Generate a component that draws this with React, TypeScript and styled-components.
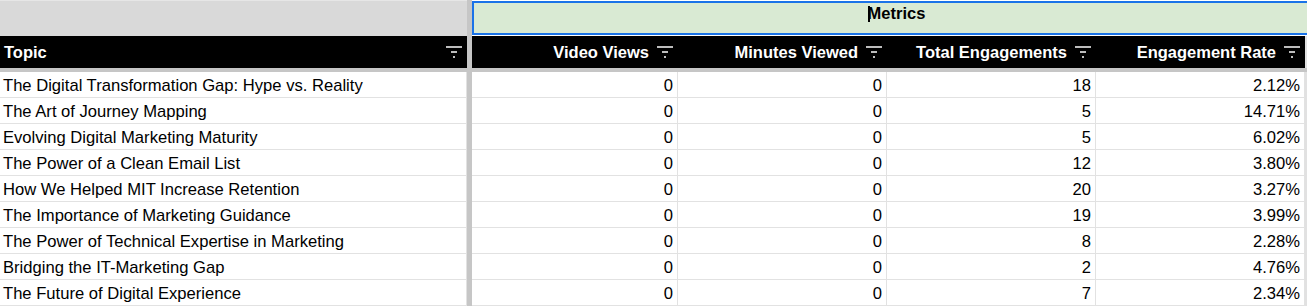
import React from "react";
import styled, { createGlobalStyle } from "styled-components";

const GlobalStyle = createGlobalStyle`
  html, body { margin: 0; padding: 0; background: #ffffff; }
  body { font-family: "Liberation Sans", Arial, sans-serif; overflow: hidden; }
`;

const COLS = "467px 5px 206px 209px 209px 209px 1fr";

const Sheet = styled.div`
  width: 1307px;
  height: 308px;
  overflow: hidden;
  display: flex;
  flex-direction: column;
  background: #ffffff;
`;

const Row = styled.div<{ $h: number }>`
  display: grid;
  grid-template-columns: ${COLS};
  height: ${(p) => p.$h}px;
  flex: none;
`;

const TopLeft = styled.div`
  background: #d9d9d9;
  border-top: 1px solid #e6e6e6;
`;

const Gutter = styled.div`
  background: #c6c6c6;
`;

const MergedCell = styled.div`
  grid-column: 3 / 8;
  margin-top: 1px;
  margin-bottom: 1px;
  background: #d9ead3;
  border: 2px solid #1a73e8;
  border-right: none;
  display: flex;
  justify-content: center;
  align-items: flex-start;
  padding-top: 1px;
  padding-left: 12px;
  font-weight: bold;
  font-size: 16.5px;
  color: #000;
  line-height: 19px;
`;

const Caret = styled.span`
  display: inline-block;
  width: 2px;
  height: 16px;
  margin-top: 2px;
  background: #000;
  margin-right: -2px;
`;

const HeadCell = styled.div<{ $left?: boolean }>`
  background: #000;
  color: #fff;
  font-weight: bold;
  font-size: 16.5px;
  display: flex;
  align-items: center;
  justify-content: ${(p) => (p.$left ? "space-between" : "flex-end")};
  gap: 8px;
  padding: 0 5px 0 4px;
  white-space: nowrap;
`;

const EdgeCell = styled.div`
  background: #e1e1e1;
`;

const DividerRow = styled.div`
  height: 4px;
  background: #c6c6c6;
  flex: none;
`;

const Cell = styled.div<{ $num?: boolean }>`
  font-size: 16.6px;
  color: #000;
  display: flex;
  align-items: center;
  justify-content: ${(p) => (p.$num ? "flex-end" : "flex-start")};
  padding: 3px 4px 0 3px;
  border-bottom: 1px solid #e2e2e2;
  border-right: 1px solid #e2e2e2;
  white-space: nowrap;
  overflow: hidden;
  background: #fff;
`;

const FilterIcon = () => (
  <svg width="16" height="12" viewBox="0 0 16 12" style={{ flex: "none" }}>
    <rect x="0" y="0" width="16" height="2" fill="#bdbdbd" />
    <rect x="5" y="5" width="6" height="2" fill="#bdbdbd" />
    <rect x="7" y="10" width="2" height="2" fill="#bdbdbd" />
  </svg>
);

const data: [string, number, number, number, string][] = [
  ["The Digital Transformation Gap: Hype vs. Reality", 0, 0, 18, "2.12%"],
  ["The Art of Journey Mapping", 0, 0, 5, "14.71%"],
  ["Evolving Digital Marketing Maturity", 0, 0, 5, "6.02%"],
  ["The Power of a Clean Email List", 0, 0, 12, "3.80%"],
  ["How We Helped MIT Increase Retention", 0, 0, 20, "3.27%"],
  ["The Importance of Marketing Guidance", 0, 0, 19, "3.99%"],
  ["The Power of Technical Expertise in Marketing", 0, 0, 8, "2.28%"],
  ["Bridging the IT-Marketing Gap", 0, 0, 2, "4.76%"],
  ["The Future of Digital Experience", 0, 0, 7, "2.34%"],
];

const headers = ["Video Views", "Minutes Viewed", "Total Engagements", "Engagement Rate"];

export default function App() {
  return (
    <>
      <GlobalStyle />
      <Sheet>
        <Row $h={36}>
          <TopLeft />
          <Gutter />
          <MergedCell>
            <Caret />
            Metrics
          </MergedCell>
        </Row>
        <Row $h={32}>
          <HeadCell $left>
            <span>Topic</span>
            <FilterIcon />
          </HeadCell>
          <Gutter />
          {headers.map((h) => (
            <HeadCell key={h}>
              <span>{h}</span>
              <FilterIcon />
            </HeadCell>
          ))}
          <EdgeCell />
        </Row>
        <DividerRow />
        {data.map((r) => (
          <Row $h={26} key={r[0]}>
            <Cell>{r[0]}</Cell>
            <Gutter />
            <Cell $num>{r[1]}</Cell>
            <Cell $num>{r[2]}</Cell>
            <Cell $num>{r[3]}</Cell>
            <Cell $num>{r[4]}</Cell>
            <EdgeCell />
          </Row>
        ))}
      </Sheet>
    </>
  );
}
